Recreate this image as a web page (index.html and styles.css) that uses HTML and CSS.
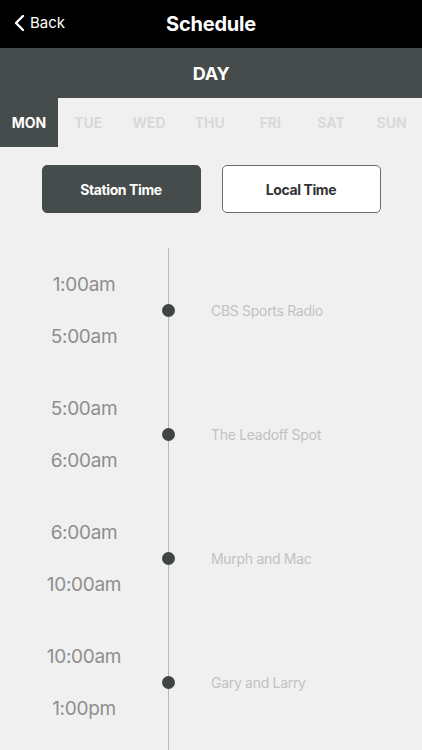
FILE: index.html
```html
<!DOCTYPE html>
<html>
<head>
    <link rel="stylesheet" href="styles.css">
</head>
<body>
    <div class="topbar">
        <a href="#" class="back">
            <svg width="11" height="18" viewBox="0 0 11 18"><path d="M9 2 L2 9 L9 16" fill="none" stroke="#fff" stroke-width="2.4" stroke-linecap="round" stroke-linejoin="round"/></svg>
            <span>Back</span>
        </a>
        <div class="title">Schedule</div>
    </div>
    <div class="daybar">DAY</div>
    <div class="days">
        <div class="day active">MON</div>
        <div class="day">TUE</div>
        <div class="day">WED</div>
        <div class="day">THU</div>
        <div class="day">FRI</div>
        <div class="day">SAT</div>
        <div class="day">SUN</div>
    </div>
    <div class="toggle">
        <a href="#" class="toggle-button selected">Station Time</a>
        <a href="#" class="toggle-button">Local Time</a>
    </div>
    <div class="timeline">
        <div class="slot">
            <div class="times"><div>1:00am</div><div>5:00am</div></div>
            <div class="marker"><div class="dot"></div></div>
            <div class="show">CBS Sports Radio</div>
        </div>
        <div class="slot">
            <div class="times"><div>5:00am</div><div>6:00am</div></div>
            <div class="marker"><div class="dot"></div></div>
            <div class="show">The Leadoff Spot</div>
        </div>
        <div class="slot">
            <div class="times"><div>6:00am</div><div>10:00am</div></div>
            <div class="marker"><div class="dot"></div></div>
            <div class="show">Murph and Mac</div>
        </div>
        <div class="slot">
            <div class="times"><div>10:00am</div><div>1:00pm</div></div>
            <div class="marker"><div class="dot"></div></div>
            <div class="show">Gary and Larry</div>
        </div>
    </div>
</body>
</html>
```
FILE: styles.css
```css
body {
    margin: 0;
    font-family: Inter, Roboto, "Liberation Sans", sans-serif;
    background-color: #f0f0f0;
}
.topbar {
    height: 48px;
    background-color: #000;
    display: flex;
    align-items: center;
    justify-content: center;
    position: relative;
}
.back {
    position: absolute;
    left: 14px;
    top: 13px;
    display: flex;
    align-items: center;
    gap: 5px;
    color: #fff;
    text-decoration: none;
    font-size: 15px;
}
.title {
    color: #fff;
    font-size: 20px;
    font-weight: bold;
    letter-spacing: -0.2px;
}
.daybar {
    height: 50px;
    background-color: #464b4b;
    color: #fff;
    font-size: 18px;
    font-weight: bold;
    display: flex;
    align-items: center;
    justify-content: center;
    letter-spacing: -0.3px;
}
.days {
    display: grid;
    grid-template-columns: 58px repeat(6, 1fr);
    height: 49px;
}
.day {
    display: flex;
    align-items: center;
    justify-content: center;
    font-size: 14px;
    font-weight: bold;
    color: #d9d9d9;
}
.day.active {
    background-color: #464b4b;
    color: #fff;
}
.toggle {
    display: flex;
    justify-content: center;
    gap: 21px;
    margin-top: 18px;
}
.toggle-button {
    width: 159px;
    height: 48px;
    box-sizing: border-box;
    border-radius: 5px;
    display: flex;
    align-items: center;
    justify-content: center;
    font-size: 14px;
    font-weight: bold;
    letter-spacing: -0.4px;
    text-decoration: none;
    color: #333;
    background-color: #fff;
    border: 1px solid #6a6a6a;
}
.toggle-button.selected {
    background-color: #464b4b;
    border-color: #464b4b;
    color: #fff;
}
.timeline {
    margin-top: 35px;
    padding-bottom: 30px;
    background: linear-gradient(#b8b8b8, #b8b8b8) no-repeat 168px 0 / 1px 100%;
}
.slot {
    display: grid;
    grid-template-columns: 161px 15px 1fr;
    height: 124px;
    align-items: center;
}
.times {
    text-align: center;
    font-size: 19px;
    line-height: 52px;
    color: #8e8e8e;
    padding-left: 7px;
    padding-top: 2px;
    letter-spacing: -0.3px;
}
.marker {
    display: flex;
    justify-content: center;
}
.dot {
    width: 13px;
    height: 13px;
    border-radius: 50%;
    background-color: #3f4444;
}
.show {
    padding-left: 35px;
    font-size: 14px;
    color: #c2c2c2;
    letter-spacing: -0.3px;
}
```
